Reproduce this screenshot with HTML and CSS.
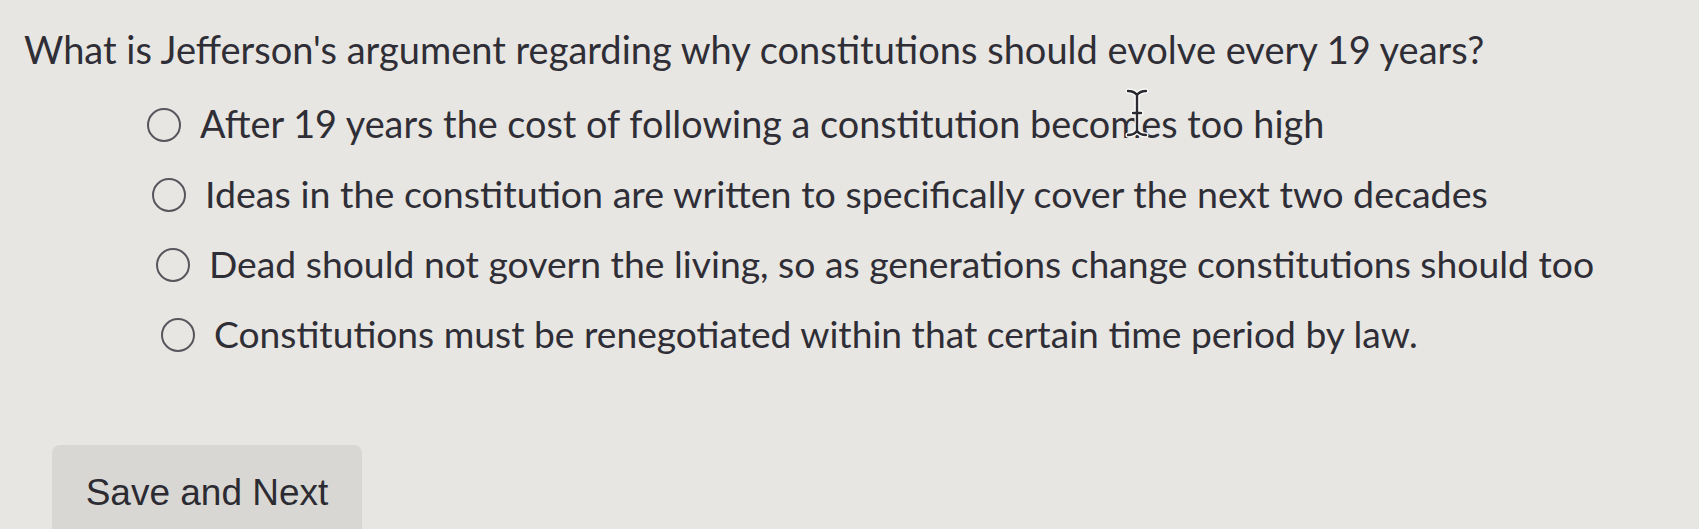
FILE: index.html
```html
<!DOCTYPE html>
<html>
<head>
<meta charset="utf-8">
<link rel="stylesheet" href="styles.css">
</head>
<body>
<div class="page">
  <h1 class="question">What is Jefferson's argument regarding why constitutions should evolve every 19 years?</h1>
  <ul class="options">
    <li class="option o1"><span class="radio"></span><span class="label">After 19 years the cost of following a constitution becomes too high</span></li>
    <li class="option o2"><span class="radio"></span><span class="label">Ideas in the constitution are written to specifically cover the next two decades</span></li>
    <li class="option o3"><span class="radio"></span><span class="label">Dead should not govern the living, so as generations change constitutions should too</span></li>
    <li class="option o4"><span class="radio"></span><span class="label">Constitutions must be renegotiated within that certain time period by law.</span></li>
  </ul>
  <div class="actions">
    <button class="btn">Save and Next</button>
  </div>
  <svg class="cursor" width="26" height="50" viewBox="0 0 26 50" aria-hidden="true">
    <path d="M4 3 Q10 3 13 7 Q16 3 22 3 M13 7 L13 43 M4 47 Q10 47 13 43 Q16 47 22 47 M9 25 L17 25" fill="none" stroke="#ffffff" stroke-width="5" stroke-linecap="round"/>
    <path d="M4 3 Q10 3 13 7 Q16 3 22 3 M13 7 L13 43 M4 47 Q10 47 13 43 Q16 47 22 47 M9 25 L17 25" fill="none" stroke="#2a2a30" stroke-width="2.4" stroke-linecap="round"/>
  </svg>
</div>
</body>
</html>
```
FILE: styles.css
```css
html, body {
  margin: 0;
  padding: 0;
  background: #e7e6e2;
  height: 100%;
  overflow: hidden;
}
.page {
  position: relative;
  padding: 26px 0 0 24px;
  font-family: Lato, "Noto Sans", sans-serif;
  color: #2f2e36;
  height: 100%;
  box-sizing: border-box;
}
.question {
  margin: 0;
  font-size: 38px;
  font-weight: 400;
  line-height: 46px;
}
.options {
  list-style: none;
  margin: 18px 0 0 0;
  padding: 0;
}
.option {
  display: flex;
  align-items: center;
  height: 70px;
}
.label {
  position: relative;
  top: -2px;
}
.o1 { padding-left: 123px; font-size: 37.8px; }
.o2 { padding-left: 128px; font-size: 37.6px; }
.o3 { padding-left: 132px; font-size: 37.3px; }
.o4 { padding-left: 137px; font-size: 37.2px; }
.radio {
  width: 30px;
  height: 30px;
  border: 2.5px solid #57565d;
  border-radius: 50%;
  margin-right: 19px;
  flex: none;
}
.actions {
  margin-top: 75px;
  padding-left: 28px;
}
.btn {
  font-family: "Liberation Sans", Arial, sans-serif;
  font-size: 37px;
  color: #2c2b32;
  background: #d8d7d4;
  border: none;
  border-radius: 8px 8px 0 0;
  width: 310px;
  height: 84px;
  padding: 27px 0 0 0;
  display: flex;
  justify-content: center;
  align-items: flex-start;
}
.cursor {
  position: absolute;
  left: 1124px;
  top: 88px;
}
```
